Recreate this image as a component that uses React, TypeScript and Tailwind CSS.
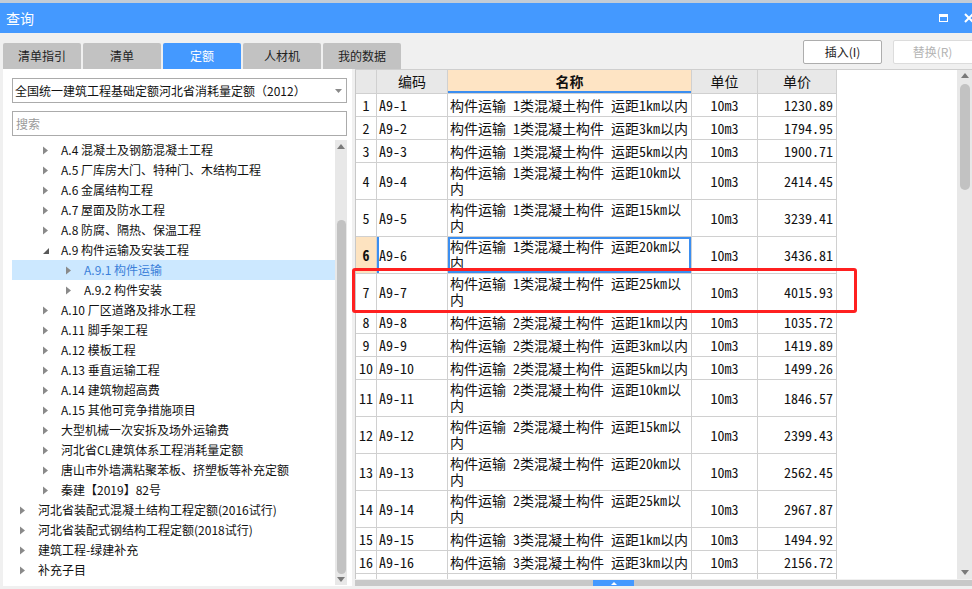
import React from "react";

type TreeItem = { level: 1 | 2 | 3; text: string; open?: boolean; selected?: boolean };

const tree: TreeItem[] = [
  { level: 2, text: "A.4 混凝土及钢筋混凝土工程" },
  { level: 2, text: "A.5 厂库房大门、特种门、木结构工程" },
  { level: 2, text: "A.6 金属结构工程" },
  { level: 2, text: "A.7 屋面及防水工程" },
  { level: 2, text: "A.8 防腐、隔热、保温工程" },
  { level: 2, text: "A.9 构件运输及安装工程", open: true },
  { level: 3, text: "A.9.1 构件运输", selected: true },
  { level: 3, text: "A.9.2 构件安装" },
  { level: 2, text: "A.10 厂区道路及排水工程" },
  { level: 2, text: "A.11 脚手架工程" },
  { level: 2, text: "A.12 模板工程" },
  { level: 2, text: "A.13 垂直运输工程" },
  { level: 2, text: "A.14 建筑物超高费" },
  { level: 2, text: "A.15 其他可竞争措施项目" },
  { level: 2, text: "大型机械一次安拆及场外运输费" },
  { level: 2, text: "河北省CL建筑体系工程消耗量定额" },
  { level: 2, text: "唐山市外墙满粘聚苯板、挤塑板等补充定额" },
  { level: 2, text: "秦建【2019】82号" },
  { level: 1, text: "河北省装配式混凝土结构工程定额(2016试行)" },
  { level: 1, text: "河北省装配式钢结构工程定额(2018试行)" },
  { level: 1, text: "建筑工程-绿建补充" },
  { level: 1, text: "补充子目" }
];

const indent = { 1: "pl-[8px]", 2: "pl-[31px]", 3: "pl-[54px]" };

// [序号, 类别, 运距km, 单价]
const rows: [number, number, number, string][] = [
  [1, 1, 1, "1230.89"],
  [2, 1, 3, "1794.95"],
  [3, 1, 5, "1900.71"],
  [4, 1, 10, "2414.45"],
  [5, 1, 15, "3239.41"],
  [6, 1, 20, "3436.81"],
  [7, 1, 25, "4015.93"],
  [8, 2, 1, "1035.72"],
  [9, 2, 3, "1419.89"],
  [10, 2, 5, "1499.26"],
  [11, 2, 10, "1846.57"],
  [12, 2, 15, "2399.43"],
  [13, 2, 20, "2562.45"],
  [14, 2, 25, "2967.87"],
  [15, 3, 1, "1494.92"],
  [16, 3, 3, "2156.72"],
  [17, 3, 5, "2610.34"]
];

const tabs = ["清单指引", "清单", "定额", "人材机", "我的数据"];

const Arrow = ({ open }: { open?: boolean }) =>
  open ? (
    <svg width="6" height="9" viewBox="0 0 6 9" className="shrink-0">
      <polygon points="6,2 6,8 0,8" fill="#595959" />
    </svg>
  ) : (
    <svg width="5" height="9" viewBox="0 0 5 9" className="shrink-0">
      <polygon points="0,0.5 5,4.5 0,8.5" fill="#8a8a8a" />
    </svg>
  );

const TableRow = ({ r }: { r: [number, number, number, string] }) => {
  const [n, cls, d, price] = r;
  const two = d >= 10;
  const active = n === 6;
  const h = two ? "h-[37px]" : "h-[23px]";
  const line1 = `构件运输 ${cls}类混凝土构件 运距${d}km以${two ? "" : "内"}`;
  return (
    <div className={`flex ${h} shrink-0 border-b border-[#d0d0d0]`}>
      <div
        className={`w-[21px] shrink-0 border-r border-[#d0d0d0] flex items-center justify-center ${
          active ? "bg-[#fde3c0] font-bold" : ""
        }`}
      >
        {n}
      </div>
      <div
        className={`w-[71px] shrink-0 border-r border-[#d0d0d0] flex items-center pl-[2px] ${
          active ? "shadow-[inset_2px_0_0_#3b8ef0]" : ""
        }`}
      >
        A9-{n}
      </div>
      <div
        className={`w-[244px] shrink-0 border-r border-[#d0d0d0] pl-[2px] whitespace-nowrap overflow-hidden ${
          two ? "pt-[1px] leading-[16px]" : "flex items-center"
        } ${active ? "shadow-[inset_0_0_0_2px_#3b8ef0]" : ""}`}
      >
        {two ? (
          <div>
            {line1}
            <br />内
          </div>
        ) : (
          <div>{line1}</div>
        )}
      </div>
      <div className="w-[66px] shrink-0 border-r border-[#d0d0d0] flex items-center justify-center">10m3</div>
      <div className="w-[79px] shrink-0 border-r border-[#d0d0d0] flex items-center justify-end pr-[3px]">
        {price}
      </div>
    </div>
  );
};

export default function App() {
  return (
    <div className="relative w-[972px] h-[589px] overflow-hidden bg-[#f0f0f0] flex flex-col font-['Noto_Sans_CJK_SC','Noto_Sans',sans-serif] text-[#1a1a1a]">
      <div className="h-[3px] shrink-0 bg-[#c3ccd6]" />

      {/* title bar */}
      <div className="h-[30px] shrink-0 bg-[#4499ff] flex items-center pl-[6px] text-white text-[14px]">
        <span>查询</span>
        <div className="ml-auto flex items-center gap-[16px]">
          <div className="w-[9px] h-[8px] border-[1.5px] border-t-[3px] border-white" />
          <svg width="10" height="10" viewBox="0 0 10 10" className="mr-[-2px]">
            <path d="M1 1 L9 9 M9 1 L1 9" stroke="white" strokeWidth="2" />
          </svg>
        </div>
      </div>

      {/* tabs + buttons */}
      <div className="h-[36px] shrink-0 flex items-end pl-[3px] relative">
        <div className="flex gap-[2px]">
          {tabs.map((t) => (
            <div
              key={t}
              className={`w-[78px] h-[26px] rounded-t-[2px] flex items-center justify-center text-[12px] ${
                t === "定额" ? "bg-[#4499ff] text-white" : "bg-[#c2c2c2] text-[#222]"
              }`}
            >
              {t}
            </div>
          ))}
        </div>
        <div className="ml-auto self-start mt-[7px] flex gap-[11px] mr-[-12px]">
          <button className="w-[79px] h-[24px] bg-white border border-[#adadad] rounded-[2px] text-[12px] text-[#222]">
            插入(I)
          </button>
          <button className="w-[91px] h-[24px] bg-white border border-[#dcdcdc] rounded-[2px] text-[12px] text-[#b4b4b4] pr-[12px]">
            替换(R)
          </button>
        </div>
      </div>

      <div className="flex flex-1 min-h-0">
        {/* left panel */}
        <div className="ml-[3px] w-[349px] h-[517px] bg-white flex flex-col pl-[9px] pr-[5px]">
          <div className="mt-[9px] h-[25px] border border-[#ababab] flex items-center pl-[2px] pr-[4px] text-[12px] text-[#111]">
            <span className="whitespace-nowrap">全国统一建筑工程基础定额河北省消耗量定额（2012）</span>
            <svg width="7" height="4" viewBox="0 0 7 4" className="ml-auto">
              <polygon points="0,0 7,0 3.5,4" fill="#8a8a8a" />
            </svg>
          </div>
          <div className="mt-[8px] h-[25px] border border-[#ababab] flex items-center pl-[3px] text-[12px] text-[#9a9a9a]">
            搜索
          </div>
          <div className="mt-[4px] flex flex-1 min-h-0">
            <div className="flex-1 flex flex-col text-[12px] text-[#111]">
              {tree.map((it) => (
                <div
                  key={it.text}
                  className={`h-[20px] shrink-0 flex items-center ${indent[it.level]} ${
                    it.selected ? "bg-[#cce8ff] text-[#3b7fd9]" : ""
                  }`}
                >
                  <div className="w-[6px] flex justify-start">
                    <Arrow open={it.open} />
                  </div>
                  <span className="ml-[12px] whitespace-nowrap">{it.text}</span>
                </div>
              ))}
            </div>
            <div className="w-[12px] h-[445px] bg-[#e8e8e8] flex flex-col items-center">
              <svg width="8" height="5" viewBox="0 0 8 5" className="mt-[4px]">
                <polygon points="0,5 8,5 4,0" fill="#7a7a7a" />
              </svg>
              <div className="mt-[71px] w-[9px] h-[354px] rounded-full bg-[#c2c2c2]" />
              <svg width="8" height="5" viewBox="0 0 8 5" className="mt-auto mb-[3px]">
                <polygon points="0,0 8,0 4,5" fill="#7a7a7a" />
              </svg>
            </div>
          </div>
        </div>

        {/* right panel */}
        <div className="ml-[3px] flex-1 flex flex-col h-[517px]">
          <div className="h-[510px] bg-white border-t border-[#cfcfcf] flex overflow-hidden">
            <div className="flex flex-col border-l border-[#c8c8c8] font-['Noto_Sans_Mono_CJK_SC','Noto_Sans_CJK_SC',monospace] text-[14px] text-[#111]">
              <div className="flex h-[24px] shrink-0 border-b border-[#d0d0d0] bg-[#e8e8e8]">
                <div className="w-[21px] border-r border-[#d0d0d0]" />
                <div className="w-[71px] border-r border-[#d0d0d0] flex items-center justify-center">编码</div>
                <div className="w-[244px] border-r border-[#d0d0d0] bg-[#fee4c4] font-bold flex items-center justify-center shadow-[inset_0_-2px_0_#3b8ef0]">
                  名称
                </div>
                <div className="w-[66px] border-r border-[#d0d0d0] flex items-center justify-center">单位</div>
                <div className="w-[79px] border-r border-[#d0d0d0] flex items-center justify-center">单价</div>
              </div>
              {rows.map((r) => (
                <TableRow key={r[0]} r={r} />
              ))}
            </div>
            <div className="ml-auto w-[15px] bg-[#e8e8e8] flex flex-col items-center">
              <svg width="8" height="5" viewBox="0 0 8 5" className="mt-[3px]">
                <polygon points="0,5 8,5 4,0" fill="#7a7a7a" />
              </svg>
              <div className="mt-[6px] w-[10px] h-[106px] rounded-full bg-[#c2c2c2]" />
              <svg width="8" height="5" viewBox="0 0 8 5" className="mt-auto mb-[4px]">
                <polygon points="0,0 8,0 4,5" fill="#7a7a7a" />
              </svg>
            </div>
          </div>
          <div className="h-[6px] mt-[1px] bg-[#c8c8c8] flex">
            <div className="ml-[238px] w-[41px] bg-[#4499ff] flex items-center justify-center">
              <svg width="6" height="3" viewBox="0 0 6 3">
                <polygon points="0,3 6,3 3,0" fill="white" />
              </svg>
            </div>
          </div>
        </div>
      </div>

      {/* annotation */}
      <div className="absolute left-[352px] top-[268px] w-[505px] h-[45px] border-[3px] border-[#ff2020] rounded-[3px] pointer-events-none" />
    </div>
  );
}
